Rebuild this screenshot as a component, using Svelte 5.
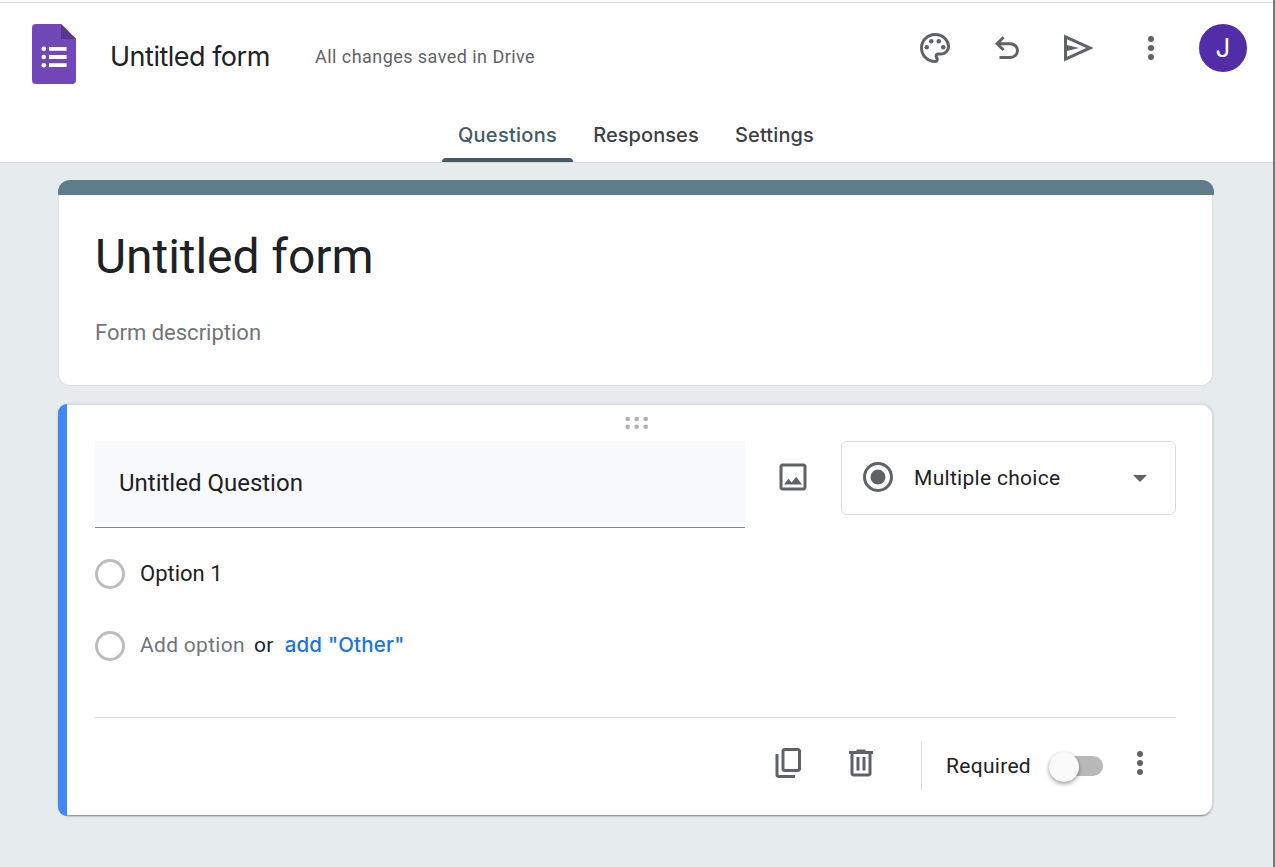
<script>
  const tabs = [
    { name: 'Questions', width: 131, spacing: 0.28 },
    { name: 'Responses', width: 136, spacing: 0.06 },
    { name: 'Settings', width: 111, spacing: 0.12 },
  ];
  let active = $state('Questions');
  const dragDots = [[2.7, 3], [11.7, 3], [20.7, 3], [2.7, 10.7], [11.7, 10.7], [20.7, 10.7]];
</script>

{#snippet icon(d)}
  <svg class="icon" viewBox="0 0 24 24" aria-hidden="true"><path d={d} /></svg>
{/snippet}

{#snippet more()}
  <svg class="icon" viewBox="0 0 24 24" aria-hidden="true">
    <circle cx="12" cy="6" r="2" /><circle cx="12" cy="12" r="2" /><circle cx="12" cy="18" r="2" />
  </svg>
{/snippet}

<div class="page">
  <header>
    <div class="bar">
      <svg class="logo" viewBox="0 0 44 60" aria-hidden="true">
        <path fill="#7248b9" d="M4 0h25l15 15v41a4 4 0 0 1-4 4H4a4 4 0 0 1-4-4V4a4 4 0 0 1 4-4z" />
        <path fill="#583689" d="M29 0l15 15H29z" />
        <g fill="#fff">
          <circle cx="11.8" cy="24.7" r="2.3" /><circle cx="11.8" cy="33" r="2.3" /><circle cx="11.8" cy="41.3" r="2.3" />
          <path d="M17 23h17.6v3.8H17zM17 31.1h17.6v3.8H17zM17 39.3h17.6v3.8H17z" />
        </g>
      </svg>
      <span class="name">Untitled form</span>
      <span class="status">All changes saved in Drive</span>
      <div class="actions">
        <svg class="icon" viewBox="0 0 24 24" aria-hidden="true">
          <path d="M12 22C6.49 22 2 17.51 2 12S6.49 2 12 2s10 4.04 10 9c0 3.31-2.69 6-6 6h-1.77c-.28 0-.5.22-.5.5 0 .12.05.23.13.33.41.47.64 1.06.64 1.67A2.5 2.5 0 0 1 12 22zm0-18c-4.41 0-8 3.59-8 8s3.59 8 8 8c.28 0 .5-.22.5-.5a.54.54 0 0 0-.14-.35c-.41-.46-.63-1.05-.63-1.65a2.5 2.5 0 0 1 2.5-2.5H16c2.21 0 4-1.79 4-4 0-3.86-3.59-7-8-7z" />
          <circle cx="6.5" cy="11.5" r="1.5" /><circle cx="9.5" cy="7.5" r="1.5" />
          <circle cx="14.5" cy="7.5" r="1.5" /><circle cx="17.5" cy="11.5" r="1.5" />
        </svg>
        {@render icon('M7 19.3v-2h7.1q1.575 0 2.738-1T18 13.65q0-1.5-1.162-2.5T14.1 10.1H7.8l2.6 2.6L9 14 4 9.1l5-5 1.4 1.4L7.8 8.1h6.3q2.425 0 4.163 1.575T20 13.65q0 2.35-1.737 4T14.1 19.3z')}
        {@render icon('M2 3v18l19.8-9zM4 6.1 16.9 12 4 17.9V14l8-2-8-2z')}
        {@render more()}
        <span class="avatar">J</span>
      </div>
    </div>
    <nav>
      {#each tabs as tab}
        <button
          class="tab"
          class:active={active === tab.name}
          style:width="{tab.width}px"
          style:letter-spacing="{tab.spacing}px"
          onclick={() => (active = tab.name)}>{tab.name}</button>
      {/each}
    </nav>
  </header>

  <main>
    <section class="intro">
      <div class="stripe"></div>
      <div class="intro-body">
        <h1>Untitled form</h1>
        <p>Form description</p>
      </div>
    </section>

    <section class="question">
      <div class="accent"></div>
      <div class="content">
        <svg class="drag" viewBox="0 0 24 13" aria-hidden="true">
          {#each dragDots as [x, y]}<circle cx={x} cy={y} r="2.3" />{/each}
        </svg>
        <div class="top">
          <div class="field"><div class="fill">Untitled Question</div></div>
          <div class="photo">
            {@render icon('M19 5v14H5V5h14m0-2H5c-1.1 0-2 .9-2 2v14c0 1.1.9 2 2 2h14c1.1 0 2-.9 2-2V5c0-1.1-.9-2-2-2zm-4.86 8.86l-3 3.87L9 13.14 6 17h12l-3.86-5.14z')}
          </div>
          <div class="select">
            <svg class="icon" viewBox="0 0 24 24" aria-hidden="true">
              <circle cx="12" cy="12" r="9" fill="none" stroke="#5f6368" stroke-width="2" />
              <circle cx="12" cy="12" r="5" />
            </svg>
            <span>Multiple choice</span>
            <svg class="caret" viewBox="0 0 14 7" aria-hidden="true"><path d="M0 0h14L7 7z" /></svg>
          </div>
        </div>
        <div class="option"><i class="radio"></i><span class="opt">Option 1</span></div>
        <div class="option second">
          <i class="radio"></i><span class="add">Add option</span><span class="or">or</span><span class="other">add "Other"</span>
        </div>
        <footer>
          {@render icon('M9 18q-.825 0-1.413-.588T7 16V4q0-.825.588-1.413T9 2h9q.825 0 1.413.588T20 4v12q0 .825-.588 1.413T18 18H9Zm0-2h9V4H9v12Zm-4 6q-.825 0-1.413-.588T3 20V6h2v14h11v2H5Z')}
          {@render icon('M7 21q-.825 0-1.413-.588T5 19V6H4V4h5V3h6v1h5v2h-1v13q0 .825-.588 1.413T17 21H7ZM17 6H7v13h10V6ZM9 17h2V8H9v9Zm4 0h2V8h-2v9Z')}
          <span class="rule"></span>
          <span class="required">Required</span>
          <span class="switch"><span class="thumb"></span></span>
          {@render more()}
        </footer>
      </div>
    </section>
  </main>
</div>

<style>
  :global(body) { margin: 0; }
  .page {
    box-sizing: border-box;
    width: 1275px;
    height: 867px;
    overflow: hidden;
    display: flex;
    flex-direction: column;
    background: #e6ebee;
    border-right: 2px solid #747775;
    font-family: Roboto, sans-serif;
    color: #202124;
  }
  .icon { width: 36px; height: 36px; fill: #5f6368; flex: none; display: block; }

  header {
    box-sizing: border-box;
    height: 163px;
    flex: none;
    padding-top: 2px;
    background: linear-gradient(#fff 2px, #dadce0 2px, #dadce0 3px, #fff 3px);
    border-bottom: 1px solid #d5d8dc;
    display: flex;
    flex-direction: column;
    justify-content: space-between;
  }
  .bar { display: flex; align-items: flex-start; padding: 22px 26px 0 32px; }
  .logo { width: 44px; height: 60px; flex: none; }
  .name {
    margin: 16px 0 0 34px;
    width: 205px;
    font: 400 27px/34px Inter, sans-serif;
    letter-spacing: -0.5px;
    white-space: nowrap;
  }
  .status { margin-top: 20px; font-size: 18px; line-height: 26px; letter-spacing: 0.45px; color: #5f6368; }
  .actions { margin-left: auto; display: flex; align-items: center; gap: 36px; }
  .avatar {
    width: 48px;
    height: 48px;
    margin-left: -6px;
    border-radius: 50%;
    background: #512da8;
    color: #fff;
    font: 400 26px/48px Inter, sans-serif;
    text-align: center;
  }
  nav { display: flex; gap: 5px; padding-left: 442px; }
  .tab {
    position: relative;
    box-sizing: border-box;
    height: 52px;
    padding: 0 0 2px;
    border: 0;
    background: none;
    font: 500 20px/46px Inter, sans-serif;
    text-align: center;
    color: #3c4043;
  }
  .tab.active { color: #455a64; }
  .tab.active::after {
    content: '';
    position: absolute;
    left: 0;
    right: 0;
    bottom: 0;
    height: 4px;
    border-radius: 4px 4px 0 0;
    background: #455a64;
  }

  main { padding: 17px 59px 0 58px; display: flex; flex-direction: column; gap: 18px; }
  .intro { width: 1156px; }
  .stripe { height: 15px; border-radius: 12px 12px 0 0; background: #607d8b; }
  .intro-body {
    box-sizing: border-box;
    width: 1155px;
    height: 191px;
    padding: 33px 36px 0;
    background: #fff;
    border: 1px solid #dadce0;
    border-top: 0;
    border-radius: 0 0 12px 12px;
  }
  h1 { margin: 0; font-size: 48px; line-height: 58px; font-weight: 400; letter-spacing: -0.05px; }
  p { margin: 32px 0 0; font-size: 22px; line-height: 30px; color: #70757a; }

  .question {
    box-sizing: border-box;
    width: 1155px;
    height: 411px;
    display: flex;
    border: solid #d8dbdf;
    border-width: 1px 1px 0 0;
    border-radius: 12px;
    box-shadow: 0 2px 2px -1px rgba(60, 64, 67, 0.6), 0 0 3px rgba(60, 64, 67, 0.18);
    background: #fff;
  }
  .accent { width: 9px; height: 412px; margin-top: -1px; flex: none; background: #4285f4; border-radius: 9px 0 0 9px; }
  .content { flex: 1; padding: 0 36px 0 28px; }
  .drag { display: block; width: 24px; height: 13px; margin: 11px 0 12px 530px; fill: #b0b0b0; }
  .top { display: flex; height: 87px; align-items: flex-start; }
  .field { width: 650px; height: 86px; border-bottom: 1px solid #80868b; }
  .fill { height: 84px; padding-left: 24px; background: #f8f9fa; font-size: 24px; line-height: 84px; }
  .photo { margin: 18px 30px 0; }
  .select {
    box-sizing: border-box;
    width: 335px;
    height: 74px;
    padding: 0 28px 2px 18px;
    border: 1px solid #dadce0;
    border-radius: 6px;
    display: flex;
    align-items: center;
    font-size: 21px;
    letter-spacing: 0.3px;
  }
  .select span { margin: 2px auto 0 18px; }
  .caret { width: 14px; height: 7px; fill: #5f6368; margin-top: 2px; }
  .option { display: flex; align-items: center; height: 30px; margin-top: 31px; font-size: 21px; }
  .option.second { margin-top: 42px; }
  .option span { margin-bottom: 2px; }
  .radio { box-sizing: border-box; width: 30px; height: 30px; border: 3px solid #bdbdbd; border-radius: 50%; margin-right: 15px; }
  .opt { font-size: 22px; }
  .add { color: #70757a; letter-spacing: 0.3px; }
  .or { margin-left: 9px; letter-spacing: 0.3px; }
  .other { margin-left: 11px; color: #1a73e8; font: 500 20.5px/26px Inter, sans-serif; letter-spacing: 0.2px; white-space: nowrap; }
  footer {
    margin-top: 56px;
    height: 90px;
    border-top: 1px solid #dadce0;
    display: flex;
    align-items: center;
    padding-right: 18px;
    justify-content: flex-end;
  }
  footer > :global(.icon + .icon) { margin-left: 36px; }
  .rule { width: 1px; height: 48px; margin: 6px 24px 0 42px; background: #dadce0; }
  .required { width: 103px; margin-top: 5px; font-size: 21px; letter-spacing: 0.3px; white-space: nowrap; }
  .switch { width: 54px; height: 20px; margin: 6px 19px 0 0; border-radius: 10px; background: #b9b9b9; display: flex; align-items: center; }
  .thumb {
    flex: none;
    width: 30px;
    height: 30px;
    margin-top: 2px;
    border-radius: 50%;
    background: #fafafa;
    box-shadow: 0 2px 4px rgba(0, 0, 0, 0.4);
  }
</style>
